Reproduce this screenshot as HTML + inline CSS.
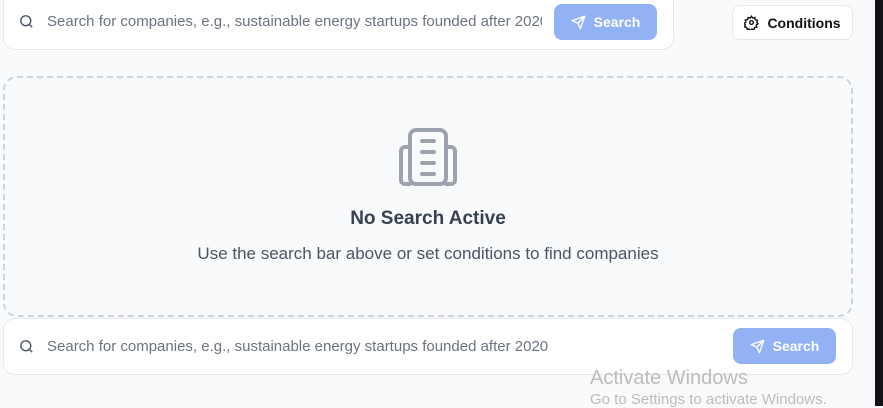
<html><head><style>
body{margin:0;width:883px;height:406px;background:#f8fafb;font-family:"Liberation Sans",sans-serif;position:relative;overflow:hidden}
.abs{position:absolute;box-sizing:border-box}
.ph{color:#6b7280;font-size:15px}
.btn{background:#93b1f5;border-radius:8px;color:#fff;font-weight:bold;font-size:14px;display:flex;align-items:center;justify-content:center;gap:8px}
</style></head><body>
<div class="abs" style="left:875px;top:0;width:8px;height:406px;background:#111318"></div>
<div class="abs" style="left:3px;top:-12px;width:671px;height:62px;background:#fff;border:1px solid #e5e7eb;border-radius:12px"></div>
<svg class="abs" style="left:18px;top:13px" width="17" height="17" viewBox="0 0 24 24" fill="none" stroke="#4b5563" stroke-width="2"><circle cx="11" cy="11" r="7"/><path d="M20 20l-4-4"/></svg>
<div class="abs ph" style="left:47px;top:13px;width:495px;white-space:nowrap;overflow:hidden">Search for companies, e.g., sustainable energy startups founded after 2020</div>
<div class="abs btn" style="left:554px;top:4px;width:103px;height:36px"><svg width="15" height="15" viewBox="0 0 24 24" fill="none" stroke="#fff" stroke-width="2.2" stroke-linejoin="round"><path d="M22 2L11 13M22 2l-7 20-4-9-9-4z"/></svg>Search</div>
<div class="abs" style="left:732px;top:5px;width:121px;height:35px;background:#fff;border:1px solid #e5e7eb;border-radius:8px;display:flex;align-items:center;justify-content:center;gap:8px;font-size:14px;font-weight:bold;color:#111"><svg width="15" height="15" viewBox="0 0 24 24" fill="none" stroke="#111" stroke-width="2.2"><circle cx="12" cy="12" r="3"/><path d="M12 2l2 3 3.5-1 .5 3.5 3.5 1-1 3.5 2 2-3 2 1 3.5-3.5.5-1 3.5-3.5-1-2 3-2-3-3.5 1-.5-3.5-3.5-1 1-3.5-2-2 3-2-1-3.5 3.5-.5 1-3.5 3.5 1z"/></svg>Conditions</div>
<div class="abs" style="left:3px;top:76px;width:850px;height:241px;border:2px dashed #cfd4db;border-radius:14px"></div>
<svg class="abs" style="left:398px;top:127px" width="62" height="60" viewBox="0 0 62 60" fill="none" stroke="#9ca3af" stroke-width="4" stroke-linecap="round"><rect x="12" y="3" width="36" height="54" rx="6"/><path d="M12 20H7a4 4 0 0 0-4 4v29a4 4 0 0 0 4 4h5M48 20h5a4 4 0 0 1 4 4v29a4 4 0 0 1-4 4h-5M24 14h12M24 25h12M24 36h12M24 47h12"/></svg>
<div class="abs" style="left:0;width:856px;top:208px;text-align:center;font-size:19px;font-weight:bold;color:#374151">No Search Active</div>
<div class="abs" style="left:0;width:856px;top:244px;text-align:center;font-size:17px;color:#4b5563">Use the search bar above or set conditions to find companies</div>
<div class="abs" style="left:3px;top:318px;width:850px;height:57px;background:#fff;border:1px solid #e5e7eb;border-radius:12px"></div>
<svg class="abs" style="left:18px;top:338px" width="17" height="17" viewBox="0 0 24 24" fill="none" stroke="#4b5563" stroke-width="2"><circle cx="11" cy="11" r="7"/><path d="M20 20l-4-4"/></svg>
<div class="abs ph" style="left:47px;top:338px;white-space:nowrap">Search for companies, e.g., sustainable energy startups founded after 2020</div>
<div class="abs btn" style="left:733px;top:328px;width:103px;height:36px"><svg width="15" height="15" viewBox="0 0 24 24" fill="none" stroke="#fff" stroke-width="2.2" stroke-linejoin="round"><path d="M22 2L11 13M22 2l-7 20-4-9-9-4z"/></svg>Search</div>
<div class="abs" style="left:590px;top:367px;font-size:20px;color:#bcbcbc">Activate Windows</div>
<div class="abs" style="left:590px;top:391px;font-size:15px;color:#bcbcbc">Go to Settings to activate Windows.</div>
</body></html>
